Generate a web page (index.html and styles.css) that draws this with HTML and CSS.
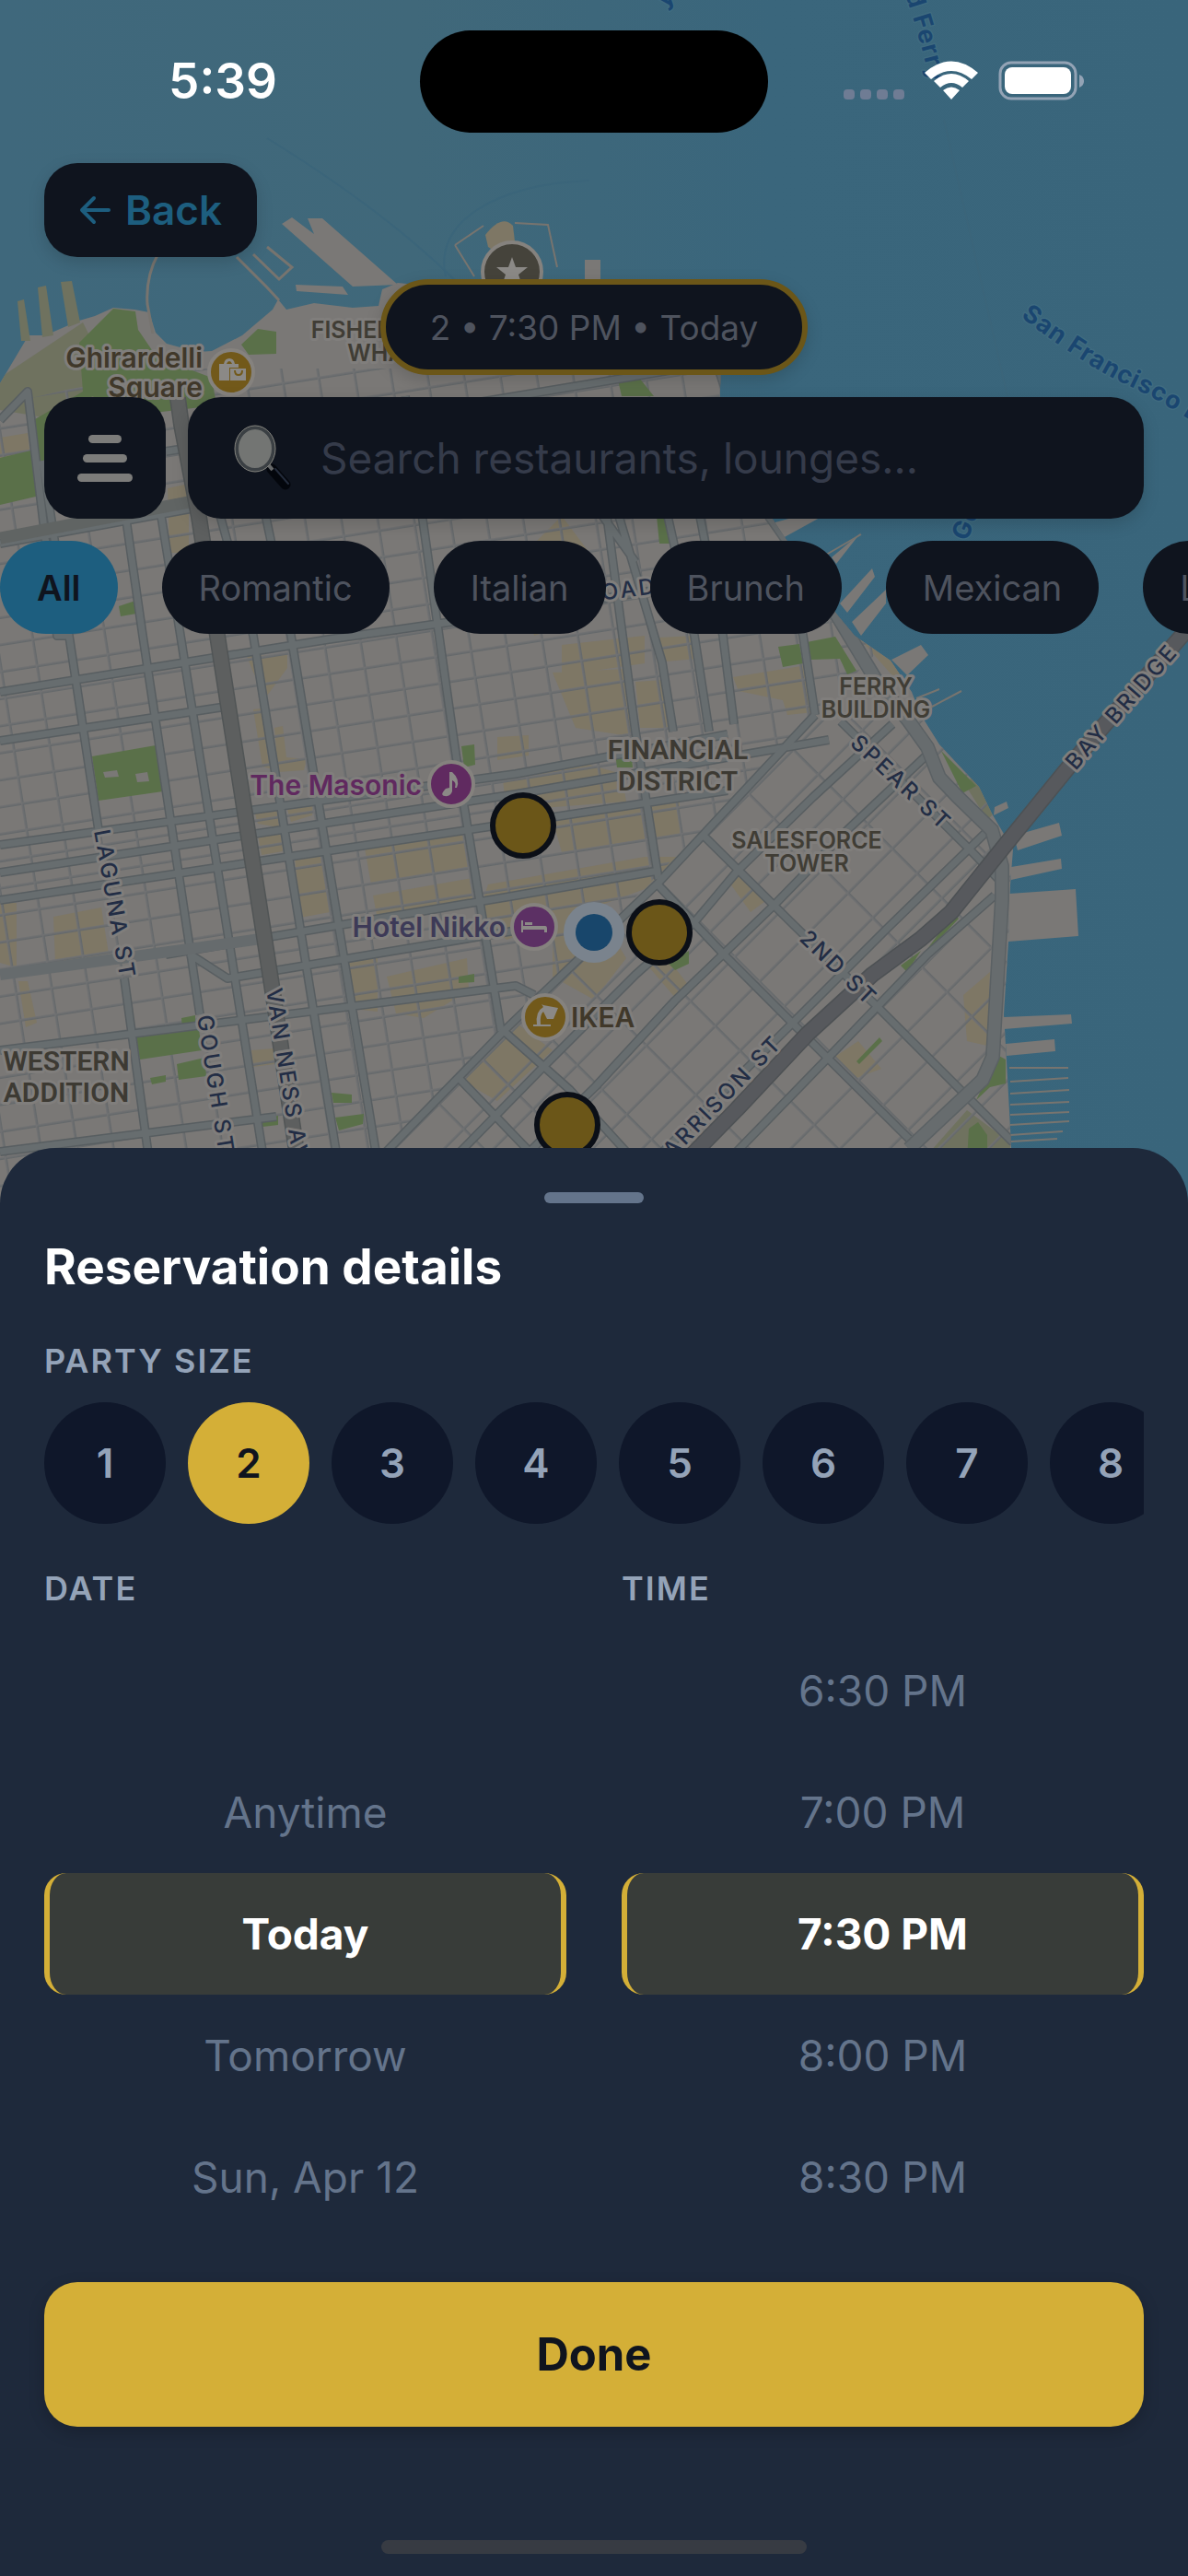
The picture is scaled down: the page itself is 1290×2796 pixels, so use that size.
FILE: index.html
```html
<!DOCTYPE html>
<html lang="en">
<head>
<meta charset="utf-8">
<meta name="viewport" content="width=device-width, initial-scale=1">
<title>Reservation details</title>
<link rel="stylesheet" href="styles.css">
</head>
<body>
<div class="screen">
  <svg class="map" viewBox="0 0 1290 1320" preserveAspectRatio="xMidYMin slice" role="img" aria-label="Map of San Francisco">
    <defs>
      <linearGradient id="bay" x1="0" y1="0" x2="1" y2="0">
        <stop offset="0" stop-color="#3f687c"/><stop offset=".35" stop-color="#40687a"/><stop offset=".65" stop-color="#3a667c"/><stop offset="1" stop-color="#39657b"/>
      </linearGradient>
      <pattern id="blocks" width="39" height="29" patternUnits="userSpaceOnUse" patternTransform="translate(34 693) rotate(-9)">
        <path d="M0 0H39M0 0V29" fill="none" stroke="#65696b" stroke-width="6"/>
        <path d="M0 0H39M0 0V29" fill="none" stroke="#707172" stroke-width="3"/>
      </pattern>
      <pattern id="soma" width="68" height="38" patternUnits="userSpaceOnUse" patternTransform="translate(715 958) rotate(-45)">
        <path d="M0 0H68M0 0V38" fill="none" stroke="#65696b" stroke-width="6"/>
        <path d="M0 0H68M0 0V38" fill="none" stroke="#707172" stroke-width="3"/>
      </pattern>
      <path id="coast" d="M0 416L31 364 49 364 86 348 103 343 123 334 146 336 162 339 169 361 181 373 214 382 230 381 263 364 296 336 302 325 311 336 341 329 383 334 411 332 415 314 432 307 560 320 700 350 783 392 781 450 810 520 838 562 870 610 908 666 928 690 967 717 990 751 1000 776 1020 808 1063 854 1077 883 1100 922 1097 961 1095 1022 1090 1101 1093 1151 1098 1243 1098 1320 0 1320Z"/>
      <clipPath id="land"><use href="#coast"/></clipPath>
      <path id="sfbay" d="M1108 344Q1180 398 1222 417T1330 480"/>
      <path id="ferry" d="M983 -6Q1002 50 1012 100"/>
    </defs>
    <rect width="1290" height="1320" fill="url(#bay)"/>
    <path d="M290 150Q420 230 500 310M484 300C470 240 540 200 640 196M1025 130L1110 500" fill="none" stroke="#3b657a" stroke-width="2"/>

    <use href="#coast" fill="#7a7876"/>
    <!-- piers -->
    <g fill="#7a7876">
      <path d="M306 243L317 236 341 254 334 237 350 237 432 309 383 311ZM321 309L372 311 378 320 322 316ZM635 282H652V330H635Z"/>
      <path d="M19 327L26 325 33 370 23 370ZM41 312L50 310 58 364 46 366ZM66 306L78 305 87 350 74 355Z" fill="#6f725f"/>
      <path d="M527 255Q545 232 557 245L559 262 545 278 530 268Z" fill="#7e7765"/>
      <path d="M838 568L860 562 890 562 850 584ZM903 605L935 578 930 584 908 612ZM912 655L947 617 950 626 920 665ZM925 675L962 640V655L935 690ZM968 716L1000 700 1008 711 985 733ZM975 725L1002 732ZM1080 876L1093 870 1095 877 1079 885ZM1101 907L1150 893 1153 907 1105 923ZM1098 941L1152 932 1153 943 1098 955ZM1096 970L1168 965 1171 1016 1095 1022ZM1090 1104L1163 1101 1164 1111 1090 1117ZM1092 1133L1145 1128 1146 1141 1093 1146Z"/>
    </g>
    <g fill="none" stroke="#77746f" stroke-width="3">
      <path d="M172 275Q158 300 160 330L166 362M257 279L290 312 303 326M275 276L303 303 317 290 290 268"/>
      <path d="M494 266L525 245M559 242L595 244 605 290M494 266L515 300M880 612L935 580M1010 768L1044 750M995 758L1020 748M1096 1159H1160M1097 1174L1160 1170M1097 1187L1161 1183M1097 1199L1161 1196M1097 1210L1161 1207M1097 1221L1161 1217M1097 1232L1154 1228M1098 1239L1148 1236" stroke-width="2"/>
    </g>

    <g clip-path="url(#land)">
      <!-- commercial areas -->
      <path fill="#7e7765" d="M0 475L30 470 34 505 0 512ZM182 530L205 525 205 600 184 600ZM268 712L312 711 312 725 290 755 275 730ZM275 770L284 769 296 835 285 832ZM298 790L307 788 311 822 333 824 330 836 302 838ZM276 880L302 875 303 898 280 894ZM310 872L340 868 339 885 316 892ZM280 906L305 902 307 924 284 928ZM320 930L350 925 358 990 326 996ZM395 915L505 898 513 940 403 960ZM405 972L518 952 524 980 410 998ZM540 800L574 798 574 820 540 825ZM610 700L700 690 700 720 610 733ZM600 730L680 726 690 800 625 790ZM690 740L720 738 725 790 695 790ZM715 692L755 690 757 715 722 718ZM796 735L876 722 884 773 855 776 850 760 802 750ZM545 838L640 830 675 840 680 870 550 880ZM600 890L690 872 738 870 738 905 610 925ZM530 960L700 930 735 930 715 950 700 965 550 1020 520 990ZM600 990L640 975 680 1040 645 1085 600 1060ZM705 1050L725 1040 748 1070 735 1085ZM790 955L800 945 835 975 815 990ZM58 995L110 985 118 1035 60 1045ZM0 980L18 980 18 1050 0 1045ZM375 1040L410 1035 410 1098 383 1095ZM420 1060L507 1040 509 1075 460 1105 430 1100ZM20 1065L30 1065 40 1110 28 1115ZM500 1172L560 1110 600 1140 540 1195ZM273 1140L297 1138 298 1155 275 1158ZM1046 1080L1075 1055 1072 1135 1050 1130ZM905 1148L932 1130 957 1160 925 1172ZM935 695L948 693 985 735 975 740ZM560 610L610 560 640 600 640 670 580 690Z"/>
      <!-- parks -->
      <path fill="#6f725f" d="M0 410L90 350 130 430 60 455 0 445ZM1060 830L1082 880 1072 890 1050 855ZM1010 1250L1050 1205 1097 1240 1097 1260H1010ZM1094 1045L1101 1080 1092 1090Z"/>
      <!-- minor streets -->
      <path d="M170 400H910L1000 660 885 776 547 1119 400 1270V1320H0V440Z" fill="url(#blocks)"/>
      <path d="M885 776L1010 776 1098 900V1320H345L547 1119Z" fill="url(#soma)"/>
      <path fill="#5a7049" d="M86 372L123 335 147 338 150 358 165 380 190 395 230 410 235 440 150 450 100 430 40 510 38 455 90 425ZM262 374L280 357 300 360 300 384 270 385ZM0 497L38 488 43 538 0 548ZM129 658L147 652 148 666 131 669ZM670 408L690 405 710 430 675 430ZM713 560L730 558 727 590 716 590ZM100 821L169 809 177 859 107 869ZM501 810L515 808 516 830 504 833ZM845 702L868 699 872 720 850 724ZM876 697L907 691 930 728 920 732 912 715 880 716ZM668 818L685 815 687 833 670 833ZM148 1126L216 1117 219 1140 152 1150ZM197 1105L212 1102V1115L198 1116ZM192 1155L222 1148 224 1168 194 1172ZM163 1170L180 1167V1174L165 1177ZM360 1186L382 1188V1197L362 1197ZM364 1213L395 1209 394 1220 368 1227ZM284 1214L302 1211V1221L285 1223ZM498 1060L515 1057 515 1066 498 1067ZM725 1045L748 1032 748 1046 733 1053ZM1022 815L1060 853 1045 861ZM1007 1030L1035 992 1041 997 1010 1030ZM978 1048L1000 1032 985 1055ZM930 1152L955 1126 958 1130 933 1155ZM1083 1145L1092 1150V1176L1075 1180 1060 1194ZM1052 1225L1062 1218 1072 1232V1260H1050Z"/>
      <path fill="#7a7876" d="M112 838L127 836 129 843 114 844ZM147 840L160 838 162 848 149 849Z"/>
      <g fill="none" stroke-linejoin="round">
        <g stroke="#585e61" stroke-width="10">
          <path id="avenues" d="M0 456L30 425 62 690 75 690M46 500L75 690 107 901M135 1062L162 1260M125 480L155 690 217 1101M175 560L196 690 285 1250M235 545L275 690 365 1250M280 520L316 690 408 1250M440 430L497 833 544 1119M655 530L676 690 690 794 715 954M672 560L719 719 731 794M725 560L754 690 770 794M760 560L785 690 797 786M850 600L872 690 885 776M0 751L357 694 560 665 900 610M0 804L245 767M0 917L560 840 790 797M0 947L560 862 900 803M0 977L560 893 790 858M180 1036L560 972 715 945M0 1140L560 1070 580 1080M0 1250L300 1212M205 1035L247 1062 560 1010M0 590L330 530 900 460M180 490L500 440 800 390M640 540L690 610"/>
          <path id="streets" d="M969 786L883 865 801 945 754 1001 690 1058 590 1158 500 1250M1007 819L920 901 840 983 733 1086 647 1179 575 1250M1070 904L963 1008 863 1108 720 1250M765 908L863 1005 950 1090 1100 1240M715 961L786 1036 861 1111 987 1236M547 1119L619 1183 680 1250M500 1172L575 1250M913 783L1053 922 1085 955M885 776L715 958 547 1119 400 1270M1080 972L1007 1036 907 1140 800 1250"/>
        </g>
        <g stroke="#676d6f" stroke-width="7"><use href="#avenues"/><use href="#streets"/></g>
      </g>
      <g fill="none">
        <path d="M0 1058L205 1030 290 1018" stroke-width="12" stroke="#666b6d"/>
        <path d="M0 584L205 545 420 500" stroke-width="13" stroke="#606463"/>
        <path d="M783 400L838 560 880 620 950 736 987 783 1007 811 1020 844 1040 865 1077 901 1088 940 1088 976 1078 1147 1067 1172 987 1247" stroke="#5b6164" stroke-width="16"/>
        <path d="M783 400L838 560 880 620 950 736 987 783 1007 811 1020 844 1040 865 1077 901 1088 940 1088 976 1078 1147 1067 1172 987 1247" stroke="#676c6e" stroke-width="13"/>
        <path d="M193 432L197 461 216 561 236 690 295 1069 325 1270" stroke="#515556" stroke-width="18"/>
        <path d="M193 432L197 461 216 561 236 690 295 1069 325 1270" stroke="#5d5f5f" stroke-width="15"/>
      </g>
    </g>
    <g fill="none" stroke-linejoin="round">
      <path d="M1292 680L1193 794 1160 833 1090 919 1033 990 1000 1019 947 1058 877 1122 800 1204 745 1260" stroke="#4d5154" stroke-width="18"/>
      <path d="M1292 680L1193 794 1160 833 1090 919 1033 990 1000 1019 947 1058 877 1122 800 1204 745 1260" stroke="#57595d" stroke-width="15"/>
    </g>

    <g class="water-name">
      <text><textPath href="#sfbay">San Francisco Bay</textPath></text>
      <text><textPath href="#ferry">d Ferry</textPath></text>
      <text x="722" y="9" transform="rotate(-40 722 9)">y</text>
      <text x="1050" y="588" transform="rotate(-68 1050 588)">Golden</text>
    </g>
    <g class="street-name">
      <text transform="translate(102 902) rotate(80)">LAGUNA ST</text>
      <text transform="translate(214 1103) rotate(81)">GOUGH ST</text>
      <text transform="translate(289 1074) rotate(81)">VAN NESS AVE</text>
      <text transform="translate(922 808) rotate(43)">SPEAR ST</text>
      <text transform="translate(867 1020) rotate(44)">2ND ST</text>
      <text transform="translate(851 1133) rotate(-46)" text-anchor="end">HARRISON ST</text>
      <text transform="translate(1168 837) rotate(-49)">BAY BRIDGE</text>
      <text transform="translate(617 656) rotate(-7)">BROADWAY</text>
    </g>
    <g class="district">
      <text x="736" y="824">FINANCIAL</text><text x="736" y="858">DISTRICT</text>
      <text x="72" y="1162">WESTERN</text><text x="72" y="1196">ADDITION</text>
    </g>
    <g class="landmark">
      <text x="951" y="754">FERRY</text><text x="951" y="779">BUILDING</text>
      <text x="876" y="921">SALESFORCE</text><text x="876" y="946">TOWER</text>
      <text x="424" y="367">FISHERMAN'S</text><text x="424" y="392">WHARF</text>
    </g>
    <g class="place">
      <text x="220" y="399" text-anchor="end">Ghirardelli</text><text x="220" y="431" text-anchor="end">Square</text>
      <text x="620" y="1115">IKEA</text>
      <text class="place-music" x="458" y="863" text-anchor="end">The Masonic</text>
      <text class="place-hotel" x="549" y="1017" text-anchor="end">Hotel Nikko</text>
    </g>

    <!-- place icons -->
    <g stroke="#85827e" stroke-width="4">
      <circle cx="251" cy="404" r="24" fill="#72591a"/><circle cx="592" cy="1104" r="24" fill="#72591a"/>
      <circle cx="490" cy="851" r="24" fill="#602a60"/><circle cx="580" cy="1006" r="24" fill="#5c3064"/>
      <circle cx="556" cy="295" r="32" fill="#45433b"/>
    </g>
    <path fill="#8b8986" d="M556 279L560 290 573 290 563 298 567 310 556 303 545 310 549 298 539 290 552 290Z"/>
    <g fill="#8b8986">
      <path d="M238 395H243Q244 389 249 389T255 395H259V399H249V413H238ZM246 395H252Q251 392 249 392T246 395ZM250 400H267V413H250ZM254 402Q254 408 259 408T264 402H262Q262 406 259 406T256 402Z" fill-rule="evenodd"/>
      <path d="M488 838H491Q500 846 496 855L494 855Q496 849 491 847V859Q489 865 483 864T484 856L488 855Z"/>
      <path d="M566 999H568V1005H592Q594 1005 594 1008V1012H591V1009H568V1012H566ZM570 1001H578V1004H570Z"/>
      <path d="M579 1112H598V1114H579ZM583 1112Q581 1098 590 1093L588 1090 590 1091 606 1094 601 1106 594 1106 590 1098Q586 1101 587 1112Z"/>
    </g>
    <!-- restaurant pins and current location -->
    <g fill="#6b5618" stroke="#0b0f17" stroke-width="6">
      <circle cx="568" cy="896" r="33"/><circle cx="716" cy="1012" r="33"/><circle cx="616" cy="1221" r="33"/>
    </g>
    <circle cx="645" cy="1012" r="33" fill="#7a838d"/><circle cx="645" cy="1012" r="20" fill="#18466b"/>
  </svg>

  <header class="status">
    <time class="clock">5:39</time>
    <span class="island"></span>
    <svg class="status-icons" viewBox="0 0 262 44" aria-hidden="true">
      <g fill="#6f7c94"><rect x="0" y="31" width="12" height="11" rx="4"/><rect x="18" y="31" width="12" height="11" rx="4"/><rect x="36" y="31" width="12" height="11" rx="4"/><rect x="54" y="31" width="12" height="11" rx="4"/></g>
      <path fill="#fff" d="M88 13Q117-12 146 13L139 20Q117 2 95 20ZM98 22Q117 6 136 22L129 29Q117 19 105 29ZM108 32Q117 25 126 32L117 42Z"/>
      <rect x="170" y="2" width="82" height="39" rx="12" fill="none" stroke="#93a3b5" stroke-width="3"/>
      <rect x="175" y="7" width="72" height="29" rx="8" fill="#fff"/>
      <path fill="#93a3b5" d="M256 15Q261 17 261 22T256 29Z"/>
    </svg>
  </header>

  <main class="controls">
    <button class="back" type="button">
      <svg width="34" height="34" viewBox="0 0 34 34" fill="none" stroke="currentColor" stroke-width="4" stroke-linecap="round" stroke-linejoin="round" aria-hidden="true"><path d="M16 4L3 17 16 30M3 17H32"/></svg>
      Back
    </button>
    <button class="summary" type="button">2 • 7:30 PM • Today</button>
    <div class="search-row">
      <button class="menu" type="button" aria-label="Filters"><span class="bar bar-short"></span><span class="bar bar-mid"></span><span class="bar"></span></button>
      <label class="search">
        <svg width="66" height="72" viewBox="0 0 66 72" aria-hidden="true">
          <path d="M43 48L58 65" stroke="#03060c" stroke-width="11" stroke-linecap="round"/>
          <path d="M47 48L61 64" stroke="#232b3b" stroke-width="2" stroke-linecap="round"/>
          <path d="M38 42L44 49" stroke="#666869" stroke-width="4"/>
          <ellipse cx="25" cy="26" rx="20" ry="23" fill="#737573" stroke="#3b4044" stroke-width="4"/>
          <ellipse cx="25" cy="26" rx="22" ry="25" fill="none" stroke="#85857f" stroke-width="1"/>
        </svg>
        <input type="text" placeholder="Search restaurants, lounges..." aria-label="Search restaurants, lounges">
      </label>
    </div>
    <div class="chips">
      <button class="chip chip-on" type="button">All</button>
      <button class="chip" type="button">Romantic</button>
      <button class="chip" type="button">Italian</button>
      <button class="chip" type="button">Brunch</button>
      <button class="chip" type="button">Mexican</button>
      <button class="chip" type="button">Lounge</button>
    </div>
  </main>

  <section class="sheet" aria-labelledby="sheet-title">
    <span class="handle"></span>
    <h1 id="sheet-title">Reservation details</h1>
    <h2 id="party">PARTY SIZE</h2>
    <div class="sizes" role="group" aria-labelledby="party">
      <button class="size" type="button">1</button>
      <button class="size size-on" type="button" aria-pressed="true">2</button>
      <button class="size" type="button">3</button>
      <button class="size" type="button">4</button>
      <button class="size" type="button">5</button>
      <button class="size" type="button">6</button>
      <button class="size" type="button">7</button>
      <button class="size" type="button">8</button>
    </div>
    <div class="pickers">
      <div class="picker" role="group" aria-labelledby="date">
        <h2 id="date">DATE</h2>
        <div class="wheel wheel-end">
          <button class="option" type="button">Anytime</button>
          <button class="option option-on" type="button" aria-pressed="true">Today</button>
          <button class="option" type="button">Tomorrow</button>
          <button class="option" type="button">Sun, Apr 12</button>
        </div>
      </div>
      <div class="picker" role="group" aria-labelledby="time">
        <h2 id="time">TIME</h2>
        <div class="wheel">
          <button class="option" type="button">6:30 PM</button>
          <button class="option" type="button">7:00 PM</button>
          <button class="option option-on" type="button" aria-pressed="true">7:30 PM</button>
          <button class="option" type="button">8:00 PM</button>
          <button class="option" type="button">8:30 PM</button>
        </div>
      </div>
    </div>
    <button class="done" type="button">Done</button>
    <span class="home"></span>
  </section>
</div>
</body>
</html>
```
FILE: styles.css
```css
* { box-sizing: border-box; }

body {
  margin: 0;
  background: #1e293b;
  font-family: Inter, "Liberation Sans", sans-serif;
}

button, input {
  margin: 0;
  padding: 0;
  border: 0;
  font: inherit;
}

h1, h2 { margin: 0; }

.screen {
  position: relative;
  display: flex;
  flex-direction: column;
  min-height: 100vh;
  overflow: hidden;
}

/* Map backdrop */
.map {
  position: absolute;
  top: 0;
  left: 0;
  width: 100%;
  height: 1320px;
}

.map text {
  paint-order: stroke;
  stroke: #807e7c;
  stroke-width: 6px;
  stroke-linejoin: round;
}

.map .water-name text {
  fill: #1a4670;
  stroke: #3f6b80;
  stroke-width: 3px;
  font-size: 27px;
  font-weight: 700;
  letter-spacing: 1px;
}

.street-name text {
  fill: #222d45;
  font-size: 24px;
  font-weight: 500;
  letter-spacing: 3px;
}

.district text {
  fill: #3d3a33;
  font-family: Roboto, sans-serif;
  font-size: 30px;
  font-weight: 600;
  text-anchor: middle;
}

.landmark text {
  fill: #403d35;
  font-size: 25px;
  font-weight: 600;
  text-anchor: middle;
}

.place text {
  fill: #40382a;
  font-size: 30px;
  font-weight: 600;
}

.map .place-music { fill: #60295f; }
.map .place-hotel { fill: #3d3a57; }

/* Status bar */
.status {
  position: relative;
  display: grid;
  grid-template-columns: 1fr 378px 1fr;
  align-items: center;
  height: 177px;
  padding-bottom: 1px;
}

.clock {
  padding-left: 28px;
  color: #fff;
  font-size: 53px;
  font-weight: 600;
  text-align: center;
}

.island {
  height: 111px;
  border-radius: 56px;
  background: #000;
}

.status-icons {
  width: 262px;
  height: 44px;
  justify-self: end;
  margin-right: 112px;
}

/* Map controls */
.controls {
  position: relative;
  display: flex;
  flex-direction: column;
}

.back {
  display: flex;
  align-items: center;
  justify-content: center;
  gap: 16px;
  align-self: flex-start;
  height: 102px;
  margin-left: 48px;
  padding: 0 38px;
  border-radius: 36px;
  background: #0f141e;
  box-shadow: 0 6px 18px rgba(0, 0, 0, .15);
  color: #1d5e7f;
  font-size: 44px;
  font-weight: 600;
}

.summary {
  align-self: center;
  height: 104px;
  margin-top: 24px;
  padding: 0 48px;
  border: 6px solid #6b5618;
  border-radius: 52px;
  background: #0f141e;
  box-shadow: 0 6px 18px rgba(0, 0, 0, .15);
  color: #4e535e;
  font-size: 37px;
}

.search-row {
  display: flex;
  gap: 24px;
  margin: 24px 48px;
}

.menu {
  display: flex;
  flex-direction: column;
  align-items: center;
  justify-content: center;
  gap: 12px;
  width: 132px;
  height: 132px;
  border-radius: 36px;
  background: #0f141e;
}

.bar {
  width: 60px;
  height: 9px;
  border-radius: 5px;
  background: #7c7c7a;
}

.bar-short { width: 36px; }
.bar-mid { width: 48px; }

.search {
  display: flex;
  flex: 1;
  align-items: center;
  gap: 30px;
  min-width: 0;
  padding: 0 48px;
  border-radius: 36px;
  background: #0f141e;
  box-shadow: 0 6px 18px rgba(0, 0, 0, .15);
}

.search input {
  flex: 1;
  min-width: 0;
  outline: 0;
  background: transparent;
  color: #7c7c7a;
  font-size: 46px;
}

.search input::placeholder { color: #353b4a; opacity: 1; }

.chips {
  display: flex;
  gap: 48px;
  overflow: hidden;
}

.chip {
  flex: none;
  height: 101px;
  padding: 0 40px;
  border-radius: 51px;
  background: #0f141e;
  color: #4e535e;
  font-size: 38px;
}

.chip-on {
  background: #1d5e7f;
  color: #0f141e;
  font-weight: 600;
}

/* Reservation sheet */
.sheet {
  position: relative;
  display: flex;
  flex-direction: column;
  margin-top: auto;
  padding: 48px 48px 24px;
  border-radius: 60px 60px 0 0;
  background: #1e293b;
}

.handle {
  align-self: center;
  width: 108px;
  height: 12px;
  border-radius: 6px;
  background: #64748b;
}

h1 {
  margin-top: 36px;
  color: #fff;
  font-size: 53px;
  font-weight: 700;
  line-height: 66px;
}

h2 {
  color: #94a3b8;
  font-size: 36px;
  font-weight: 600;
  letter-spacing: 2px;
  line-height: 42px;
}

#party { margin-top: 48px; }

.sizes {
  display: flex;
  gap: 24px;
  margin-top: 24px;
  overflow: hidden;
}

.size {
  flex: none;
  width: 132px;
  height: 132px;
  border-radius: 50%;
  background: #0f172a;
  color: #94a3b8;
  font-size: 44px;
  font-weight: 600;
}

.size-on {
  background: #d4af37;
  color: #0f141e;
}

.pickers {
  display: grid;
  grid-template-columns: 1fr 1fr;
  gap: 60px;
  margin-top: 49px;
}

.wheel {
  display: flex;
  flex-direction: column;
  height: 660px;
  margin-top: 24px;
}

.wheel-end { justify-content: flex-end; }

.option {
  height: 132px;
  background: transparent;
  color: #64748b;
  font-size: 46px;
}

.option-on {
  border-right: 6px solid #d4af37;
  border-left: 6px solid #d4af37;
  border-radius: 24px;
  background: #383c39;
  color: #fff;
  font-weight: 700;
}

.done {
  height: 157px;
  margin-top: 48px;
  border-radius: 36px;
  background: #d4af37;
  box-shadow: 0 6px 18px rgba(0, 0, 0, .2);
  color: #0f141e;
  font-size: 49px;
  font-weight: 700;
}

.home {
  align-self: center;
  width: 462px;
  height: 15px;
  margin-top: 123px;
  border-radius: 8px;
  background: #373b43;
}
```
